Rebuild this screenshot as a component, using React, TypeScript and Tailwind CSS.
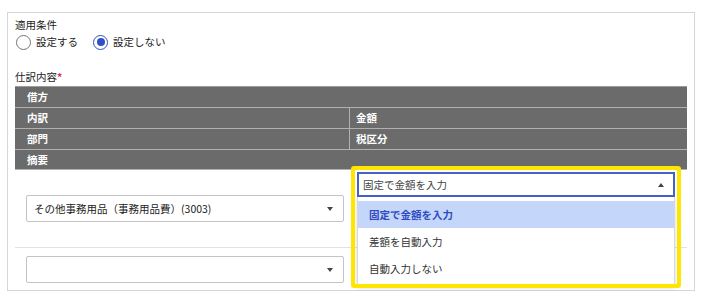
import React from "react";

const options = ["固定で金額を入力", "差額を自動入力", "自動入力しない"];

function Caret({ up = false }: { up?: boolean }) {
  return (
    <svg width="6" height="4" viewBox="0 0 6 4" className="shrink-0">
      <path d={up ? "M0 4 L3 0 L6 4 Z" : "M0 0 L6 0 L3 4 Z"} fill="#444" />
    </svg>
  );
}

function Radio({ checked, label }: { checked?: boolean; label: string }) {
  return (
    <label className="flex items-center gap-[5px]">
      <span
        className={
          "flex h-[15px] w-[15px] items-center justify-center rounded-full border-[1.5px] " +
          (checked ? "border-[#2f4fc4]" : "border-[#757575]")
        }
      >
        {checked && <span className="h-[8px] w-[8px] rounded-full bg-[#2f4fc4]" />}
      </span>
      <span className="text-[#222]">{label}</span>
    </label>
  );
}

function Select({ value }: { value?: string }) {
  return (
    <div className="flex h-[27px] w-[318px] items-center justify-between rounded-[2px] border border-[#c4c4c4] bg-white pl-[7px] pr-[10px] text-[#222]">
      <span>{value}</span>
      <Caret />
    </div>
  );
}

export default function App() {
  return (
    <div className="h-[300px] w-[703px] overflow-hidden bg-white pl-[7px] pt-[12px] font-['Noto_Sans_CJK_JP','Noto_Sans',sans-serif] text-[10.5px] leading-[16px]">
      <div className="h-[279px] w-[688px] border border-[#d6d6d6] px-[7px] pt-[4px]">
        <div className="text-[#222]">適用条件</div>
        <div className="flex h-[18px] items-center gap-[15px] pl-[1px]">
          <Radio label="設定する" />
          <Radio checked label="設定しない" />
        </div>
        <div className="mt-[18px] text-[#222]">
          仕訳内容<span className="font-bold text-[#e0303a]">*</span>
        </div>

        <div className="mt-[1px] bg-[#6b6b6b] font-bold text-white">
          <div className="flex h-[21px] items-center border-t border-[#9a9a9a] pl-[12px]">借方</div>
          <div className="flex h-[21px] border-t border-[#b0b0b0]">
            <div className="flex w-[335px] items-center border-r border-[#b0b0b0] pl-[12px]">内訳</div>
            <div className="flex items-center pl-[6px]">金額</div>
          </div>
          <div className="flex h-[21px] border-t border-[#b0b0b0]">
            <div className="flex w-[335px] items-center border-r border-[#b0b0b0] pl-[12px]">部門</div>
            <div className="flex items-center pl-[6px]">税区分</div>
          </div>
          <div className="flex h-[21px] items-center border-y border-[#b0b0b0] pl-[12px]">摘要</div>
        </div>

        <div className="flex h-[78px] border-b border-[#e2e2e2]">
          <div className="flex w-[335px] items-center pl-[11px]">
            <Select value="その他事務用品（事務用品費）(3003)" />
          </div>
          <div className="relative pl-[7px] pt-[2px]">
            <div className="relative z-10 w-[318px]">
              <div className="flex h-[25px] items-center justify-between border-2 border-[#4562c6] bg-white pl-[4px] pr-[9px] text-[#444]">
                <span>固定で金額を入力</span>
                <Caret up />
              </div>
              <div className="absolute left-0 top-full w-full border border-t-0 border-[#d8d8d8] bg-white pb-[3px] pt-[4px] shadow-[0_2px_4px_rgba(0,0,0,0.15)]">
                {options.map((o, i) => (
                  <div
                    key={o}
                    className={
                      "flex h-[27px] items-center pl-[11px] " +
                      (i === 0 ? "bg-[#c5d6fb] font-bold text-[#2f4cc0]" : "text-[#333]")
                    }
                  >
                    {o}
                  </div>
                ))}
              </div>
              <div className="pointer-events-none absolute left-[-6px] top-[-6px] h-[122px] w-[330px] rounded-[3px] border-4 border-[#ffe600]" />
            </div>
          </div>
        </div>

        <div className="flex pt-[8px]">
          <div className="w-[335px] pl-[11px]">
            <Select />
          </div>
        </div>
      </div>
    </div>
  );
}
